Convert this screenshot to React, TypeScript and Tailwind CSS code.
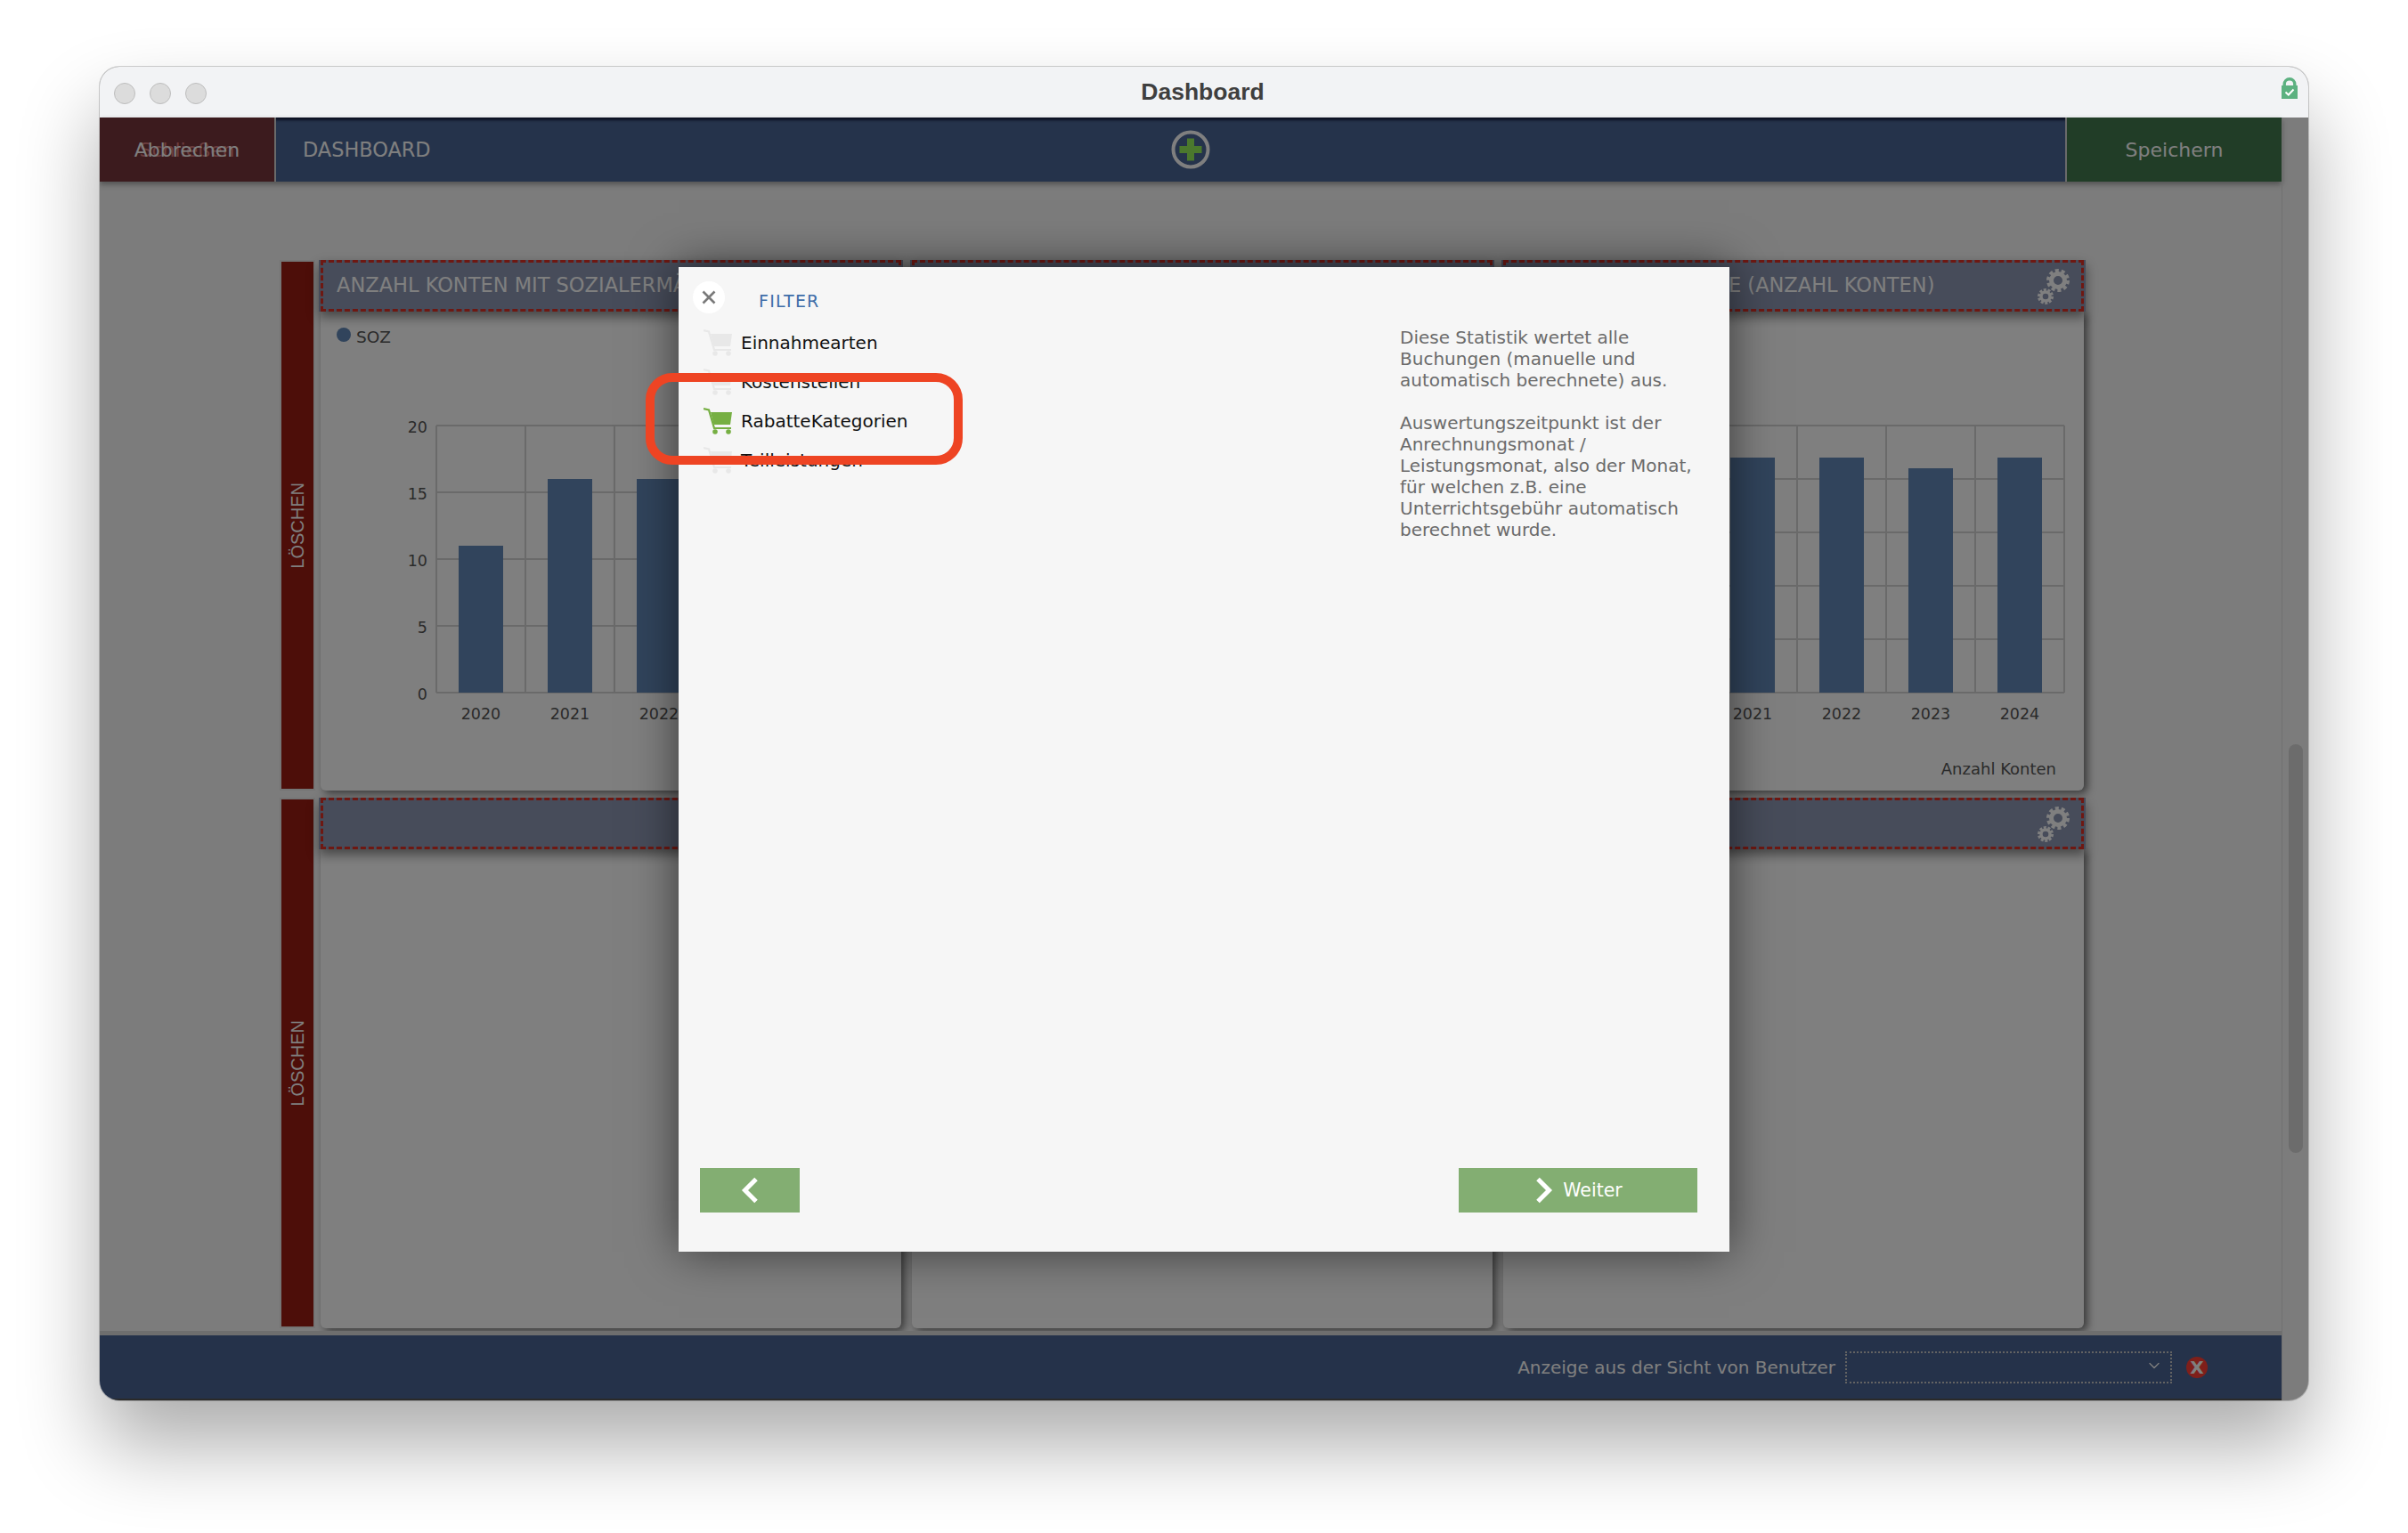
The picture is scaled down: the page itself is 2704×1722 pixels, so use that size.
import React from "react";
import { ChevronDown } from "lucide-react";

const Gear = () => (
  <svg width="40" height="44" viewBox="0 0 40 44" className="shrink-0">
    <g fill="none" stroke="#ffffff">
      <circle cx="24" cy="16" r="11" strokeWidth="4" strokeDasharray="4 2.9" />
      <circle cx="24" cy="16" r="7.5" strokeWidth="5" />
      <circle cx="10" cy="34" r="7.5" strokeWidth="3" strokeDasharray="3 1.7" />
      <circle cx="10" cy="34" r="5" strokeWidth="3.4" />
    </g>
  </svg>
);

const Cart = ({ active }: { active?: boolean }) => {
  const c = active ? "#76af43" : "#e8e8e8";
  return (
    <svg width="32" height="31" viewBox="0 0 32 31" className="shrink-0">
      <path d="M0 2 L6 3.5 L12 24 L31 24" fill="none" stroke={c} strokeWidth="2.2" />
      <path d="M8 6 L32 6 L30 20 L11.5 20 Z" fill={c} />
      <circle cx="13" cy="28" r="2.8" fill={c} />
      <circle cx="28" cy="28" r="2.8" fill={c} />
    </svg>
  );
};

type Bar = { year: string; x: number; h: number };

const Chart = ({
  bars,
  lines,
  yLabels,
  legend,
  unit,
}: {
  bars: Bar[];
  lines: number[];
  yLabels?: boolean;
  legend?: boolean;
  unit?: boolean;
}) => (
  <svg width="652" height="538" viewBox="0 0 652 538" className="block font-['DejaVu_Sans',sans-serif]">
    {legend && (
      <>
        <circle cx="26" cy="26" r="8" fill="#6288b8" />
        <text x="40" y="35" fontSize="18.5" fill="#565656">SOZ</text>
      </>
    )}
    {lines.map((y) => (
      <line key={y} x1="130" x2="630" y1={y} y2={y} stroke="#d4d4d4" strokeWidth="2" />
    ))}
    {[130, 230, 330, 430, 530, 630].map((x) => (
      <line key={x} x1={x} x2={x} y1="128" y2="428" stroke="#d4d4d4" strokeWidth="2" />
    ))}
    {bars.map((b) => (
      <g key={b.year}>
        <rect x={b.x} y={428 - b.h} width="50" height={b.h} fill="#6288b8" />
        <text x={b.x + 25} y="458" fontSize="17.5" textAnchor="middle" fill="#565656">{b.year}</text>
      </g>
    ))}
    {yLabels &&
      ["20", "15", "10", "5", "0"].map((t, i) => (
        <text key={t} x="120" y={136 + i * 75} fontSize="17.5" textAnchor="end" fill="#565656">{t}</text>
      ))}
    {unit && (
      <text x="621" y="520" fontSize="18" textAnchor="end" fill="#565656">Anzahl Konten</text>
    )}
  </svg>
);

const Column = ({
  title,
  gear,
  indent,
  children,
}: {
  title?: string;
  gear?: boolean;
  indent?: boolean;
  children?: React.ReactNode;
}) => (
  <div className="flex h-full w-[656px] flex-col">
    <div className="relative z-10 h-[58px] bg-[#8e98b4] px-[2px] shadow-[0_6px_12px_rgba(0,0,0,0.45)]">
      <div className="flex h-full items-center justify-between border-[3px] border-dashed border-[#dc3024] pr-[10px]">
        <span
          className={
            indent
              ? "whitespace-nowrap pl-[250px] text-[22.5px] text-white"
              : "whitespace-nowrap pl-[15px] text-[22.5px] text-white"
          }
        >
          {title}
        </span>
        {gear && <Gear />}
      </div>
    </div>
    <div className="mx-[2px] flex-1 rounded-b-[6px] bg-white shadow-[4px_3px_10px_rgba(0,0,0,0.55)]">{children}</div>
  </div>
);

const Row = ({ children, label = "LÖSCHEN" }: { children: React.ReactNode; label?: string }) => (
  <div className="flex h-[596px] gap-[4px]">
    <div className="flex h-full w-[40px] items-center justify-center border-2 border-[#ebebeb] bg-[#9a1c12]">
      <span className="rotate-180 font-['Liberation_Sans',sans-serif] text-[20px] text-white [writing-mode:vertical-rl]">
        {label}
      </span>
    </div>
    <div className="flex h-full gap-[8px]">{children}</div>
  </div>
);

const items = ["Einnahmearten", "Kostenstellen", "RabatteKategorien", "Teilleistungen"];

export default function App() {
  return (
    <div className="relative h-[1722px] w-[2704px] overflow-hidden bg-white pl-[112px] pt-[75px] font-['DejaVu_Sans',sans-serif]">
      <div className="flex h-[1498px] w-[2480px] flex-col overflow-hidden rounded-[22px] bg-[#7c7c7c] shadow-[0_50px_90px_0_rgba(0,0,0,0.33),0_0_0_1px_rgba(0,0,0,0.18)]">
        {/* title bar */}
        <div className="flex h-[57px] shrink-0 items-center bg-[#f2f3f5]">
          <div className="flex flex-1 gap-[16px] pl-[16px] pt-[2px]">
            <span className="h-[24px] w-[24px] rounded-full border border-[#bdbdbd] bg-[#dcdcdc]" />
            <span className="h-[24px] w-[24px] rounded-full border border-[#bdbdbd] bg-[#dcdcdc]" />
            <span className="h-[24px] w-[24px] rounded-full border border-[#bdbdbd] bg-[#dcdcdc]" />
          </div>
          <div className="pr-[7px] font-['Liberation_Sans',sans-serif] text-[26.5px] font-bold text-[#3f3f3f]">Dashboard</div>
          <div className="flex flex-1 justify-end pb-[11px] pr-[12px]">
            <svg width="18" height="25" viewBox="0 0 18 25">
              <path d="M3.2 11 V8.5 a5.8 5.8 0 0 1 11.6 0 V11" fill="none" stroke="#5cb180" strokeWidth="3.4" />
              <rect x="0" y="10" width="18" height="15" fill="#5cb180" />
              <path d="M4.5 17.5 L7.8 20.5 L13.5 14.5" fill="none" stroke="#ffffff" strokeWidth="2" />
            </svg>
          </div>
        </div>

        {/* dimmed application */}
        <div className="relative flex min-h-0 flex-1 bg-[#f8f8f8]">
          <div className="flex w-[2450px] flex-col">
            <div className="flex h-[72px] shrink-0 items-center bg-[#4a6696] text-[22px] text-white shadow-[inset_0_3px_3px_rgba(0,0,30,0.7),0_3px_6px_rgba(0,0,0,0.35)]">
              <div className="relative flex h-full w-[198px] items-center justify-center border-r-[2px] border-[#d4d4d4] bg-[#78363c]">
                <span className="absolute text-[#d87a7a]">Schließen</span>
                <span className="relative">Abbrechen</span>
              </div>
              <span className="pl-[30px] pt-[1px] text-[22.4px]">DASHBOARD</span>
              <svg width="44" height="44" viewBox="0 0 44 44" className="mb-[1px] ml-[831px] shrink-0">
                <circle cx="22" cy="22" r="19.5" fill="none" stroke="#ffffff" strokeWidth="4" />
                <path d="M22 9.5 V34.5 M9.5 22 H34.5" stroke="#96f05a" strokeWidth="8" />
              </svg>
              <div className="ml-auto flex h-full w-[243px] items-center justify-center border-l-[2px] border-[#d4d4d4] bg-[#427a4e]">
                Speichern
              </div>
            </div>

            <div className="flex min-h-0 flex-1 flex-col gap-[8px] pl-[202px] pt-[88px]">
              <Row>
                <Column title="ANZAHL KONTEN MIT SOZIALERMÄSSIGUNG">
                  <Chart
                    legend
                    yLabels
                    lines={[128, 203, 278, 353, 428]}
                    bars={[
                      { year: "2020", x: 155, h: 165 },
                      { year: "2021", x: 255, h: 240 },
                      { year: "2022", x: 355, h: 240 },
                    ]}
                  />
                </Column>
                <Column />
                <Column title="E (ANZAHL KONTEN)" gear indent>
                  <Chart
                    unit
                    lines={[128, 188, 248, 308, 368, 428]}
                    bars={[
                      { year: "2021", x: 255, h: 264 },
                      { year: "2022", x: 355, h: 264 },
                      { year: "2023", x: 455, h: 252 },
                      { year: "2024", x: 555, h: 264 },
                    ]}
                  />
                </Column>
              </Row>
              <Row>
                <Column />
                <Column />
                <Column gear />
              </Row>
            </div>

            <div className="flex h-[78px] shrink-0 items-center justify-end border-b-2 border-t-[5px] border-b-[#555555] border-t-[#dcdcdc] bg-[#4a6494] pr-[83px] text-[20px] text-white">
              <span>Anzeige aus der Sicht von Benutzer</span>
              <div className="ml-[11px] flex h-[36px] w-[367px] items-center justify-end border-2 border-dotted border-[#c6c6c6] pr-[8px]">
                <ChevronDown size={20} strokeWidth={1.5} color="#ffffff" className="mb-[4px]" />
              </div>
              <div className="ml-[16px] flex h-[24px] w-[24px] items-center justify-center rounded-full bg-[#ff3e34] text-[20px] font-bold leading-none text-white">
                X
              </div>
            </div>
          </div>

          <div className="flex flex-1 justify-center border-l border-[#e2e2e2] pt-[704px]">
            <div className="h-[459px] w-[16px] rounded-full bg-[#d8d8d8]" />
          </div>

          {/* dim layer */}
          <div className="absolute inset-0 z-20 bg-black/50" />

          {/* modal */}
          <div className="absolute left-[650px] top-[168px] z-30 flex h-[1106px] w-[1180px] flex-col bg-[#f6f6f6] shadow-[0_0_50px_rgba(0,0,0,0.55)]">
            <div className="flex items-center pl-[16px] pt-[16px]">
              <div className="flex h-[36px] w-[36px] items-center justify-center rounded-full bg-white">
                <svg width="18" height="18" viewBox="0 0 18 18">
                  <path d="M2.5 2.5 L15.5 15.5 M15.5 2.5 L2.5 15.5" stroke="#7a7a7a" strokeWidth="2.6" />
                </svg>
              </div>
              <span className="ml-[38px] pt-[8px] text-[19px] tracking-[1.2px] text-[#3e6da8]">FILTER</span>
            </div>
            <div className="flex flex-1">
              <div className="flex-1 pl-[28px] pt-[10px]">
                {items.map((t, i) => (
                  <div key={t} className="flex h-[44px] items-center gap-[10px] text-[20px] text-[#111111]">
                    <Cart active={i === 2} />
                    <span>{t}</span>
                  </div>
                ))}
              </div>
              <div className="w-[370px] pt-[14px] text-[20px] leading-[24px] text-[#6b6b6b]">
                <p>Diese Statistik wertet alle<br />Buchungen (manuelle und<br />automatisch berechnete) aus.</p>
                <p className="mt-[24px]">
                  Auswertungszeitpunkt ist der<br />Anrechnungsmonat /<br />Leistungsmonat, also der Monat,<br />für welchen z.B. eine<br />Unterrichtsgebühr automatisch<br />berechnet wurde.
                </p>
              </div>
            </div>
            <div className="flex items-center justify-between pb-[44px] pl-[24px] pr-[36px]">
              <div className="flex h-[50px] w-[112px] items-center justify-center bg-[#83ae72]">
                <svg width="20" height="30" viewBox="0 0 20 30">
                  <path d="M17 2.5 L4.5 15 L17 27.5" fill="none" stroke="#ffffff" strokeWidth="5" />
                </svg>
              </div>
              <div className="flex h-[50px] w-[268px] items-center justify-center gap-[11px] bg-[#83ae72] pl-[2px] text-[20.5px] text-white">
                <svg width="20" height="30" viewBox="0 0 20 30">
                  <path d="M3 2.5 L15.5 15 L3 27.5" fill="none" stroke="#ffffff" strokeWidth="5" />
                </svg>
                <span>Weiter</span>
              </div>
            </div>
          </div>
        </div>
      </div>

      {/* annotation */}
      <div className="absolute left-[725px] top-[419px] z-40 h-[103px] w-[356px] rounded-[30px] border-[10px] border-[#ee4423]" />
    </div>
  );
}
